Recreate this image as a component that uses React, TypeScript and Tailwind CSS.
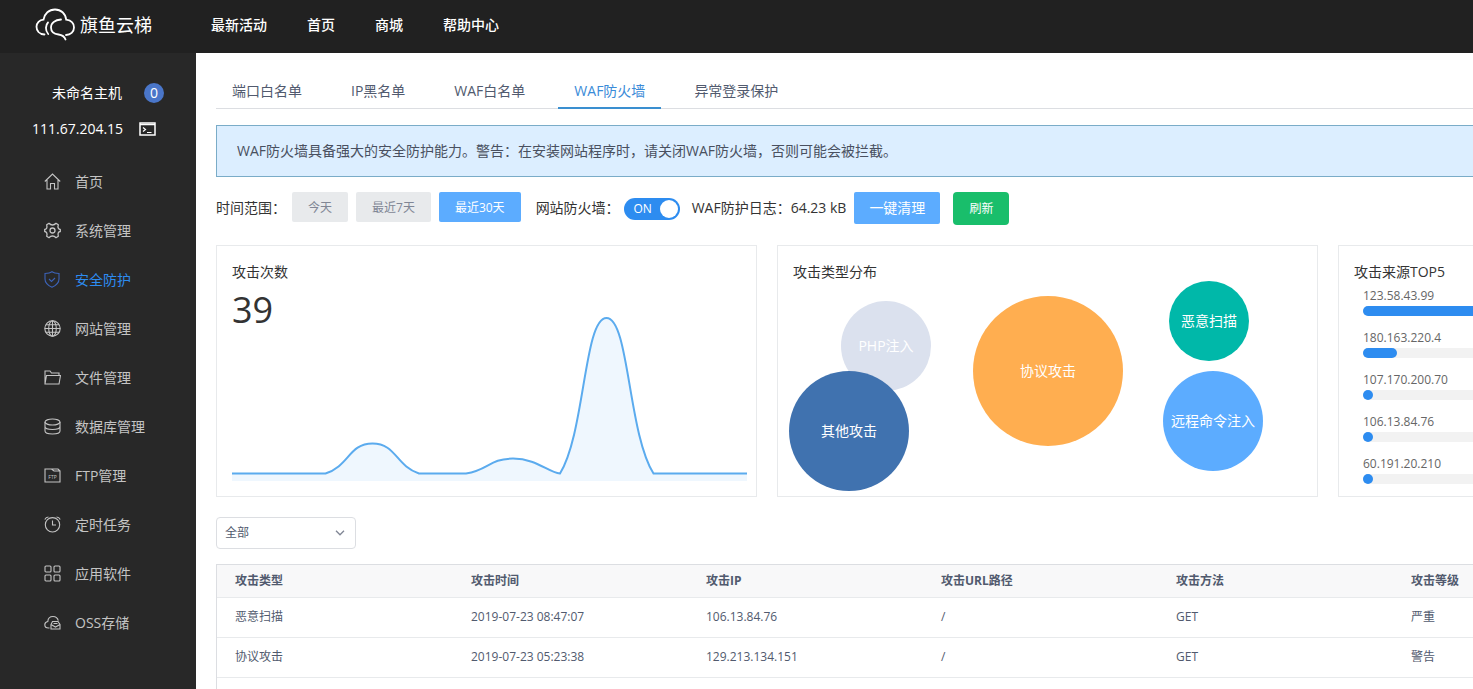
import React, { useState } from 'react';

const navLinks = ['最新活动', '首页', '商城', '帮助中心'];

const tabs = ['端口白名单', 'IP黑名单', 'WAF白名单', 'WAF防火墙', '异常登录保护'];

const ranges = ['今天', '最近7天', '最近30天'];

const menuItems = [
  { label: '首页', icon: <path d="M.8 8.5 8.5 1l7.700 7.500M3 7v9h3.500v-5.500h4V16H14V7" /> },
  {
    label: '系统管理',
    icon: (
      <>
        <path
          d="M5 1.300Q6.500 3 8.500 3T12 1.300L14.300 2.800Q13.600 5 14.300 6.200T16.300 7.500V9.500Q14.800 9.800 14.300 10.800T14.300 14.200L12 15.700Q10.500 14 8.500 14T5 15.700L2.700 14.200Q3.400 12 2.700 10.800T.7 9.500V7.500Q2.200 7.200 2.700 6.200T2.700 2.800z"
          strokeWidth="1.3"
          strokeLinejoin="round"
        />
        <circle cx="8.5" cy="8.5" r="2.5" strokeWidth="1.3" />
      </>
    ),
  },
  {
    label: '安全防护',
    icon: (
      <>
        <path d="M1 2.500C4 2.500 6.500 2 8 .8 9.500 2 12 2.500 15 2.500V8c0 4-3 6.500-7 8.200C4 14.500 1 12 1 8z" />
        <path d="m5 8 2.500 2.500L11 7" />
      </>
    ),
  },
  {
    label: '网站管理',
    icon: (
      <>
        <circle cx="8.5" cy="8.5" r="7.7" />
        <ellipse cx="8.5" cy="8.5" rx="3.8" ry="7.7" />
        <path d="M8.500.8v15.400M.8 8.500h15.400M2 4.700h13M2 12.300h13" />
      </>
    ),
  },
  { label: '文件管理', icon: <path d="M1 15V2h5l1.500 2H15v2.500M1 15l1.500-8.500h14L15 15z" /> },
  {
    label: '数据库管理',
    icon: (
      <>
        <ellipse cx="8.5" cy="4" rx="7.5" ry="3" />
        <path d="M1 4v9c0 4 15 4 15 0V4M1 8.500c0 4 15 4 15 0" />
      </>
    ),
  },
  {
    label: 'FTP管理',
    icon: (
      <>
        <path d="M1 15V2h6.500L10 4h6v11zM7.500 2H14l2 2" />
        <text x="8.5" y="11.5" textAnchor="middle" fontSize="5" stroke="none" fill="currentColor">
          FTP
        </text>
      </>
    ),
  },
  {
    label: '定时任务',
    icon: (
      <>
        <circle cx="8.5" cy="8.8" r="7.2" />
        <path d="M8.500 4.500V9H12M.8 3.500C1.500 2 3 1 4.500 1M16.200 3.500C15.500 2 14 1 12.500 1" />
      </>
    ),
  },
  {
    label: '应用软件',
    icon: (
      <>
        <rect x="1" y="1" width="6" height="6" rx="1" />
        <rect x="10" y="1" width="6" height="6" rx="1" />
        <rect x="1" y="10" width="6" height="6" rx="1" />
        <rect x="10" y="10" width="6" height="6" rx="1" />
      </>
    ),
  },
  {
    label: 'OSS存储',
    icon: (
      <>
        <path d="M5.500 14h-1C2 14 .8 12.500.8 10.700.8 9 2 7.800 3.800 7.500 4 4.500 6 2.500 9 2.500s4.700 1.700 5.300 4.200" />
        <path d="M7 10.500 8.500 7.500H14l2 3V15H7zM7 10.500l4.500 2.500 4.500-2.500M9.500 9.500h4" />
      </>
    ),
  },
];

const bubbles = [
  { label: 'PHP注入', cx: 108, cy: 72, r: 45, fill: '#dbe1ee' },
  { label: '其他攻击', cx: 71, cy: 157, r: 60, fill: '#4072af' },
  { label: '协议攻击', cx: 270, cy: 97, r: 75, fill: '#ffae50' },
  { label: '恶意扫描', cx: 431, cy: 47, r: 40, fill: '#00b8a9' },
  { label: '远程命令注入', cx: 435, cy: 147, r: 50, fill: '#5cacff' },
];

const sources = [
  { ip: '123.58.43.99', percent: 60 },
  { ip: '180.163.220.4', percent: 7 },
  { ip: '107.170.200.70', percent: 2 },
  { ip: '106.13.84.76', percent: 2 },
  { ip: '60.191.20.210', percent: 2 },
];

const columns = ['攻击类型', '攻击时间', '攻击IP', '攻击URL路径', '攻击方法', '攻击等级'];

const records = [
  ['恶意扫描', '2019-07-23 08:47:07', '106.13.84.76', '/', 'GET', '严重'],
  ['协议攻击', '2019-07-23 05:23:38', '129.213.134.151', '/', 'GET', '警告'],
];

const LINE =
  'M0 162.500H93.500C117 155 117 132.500 140.500 132.500S164 155 187 162.500H234C257 159 257 147.600 281 147.600S316 161.500 328 162.500C353 122 352 7 374.500 7S396 122 421.500 162.500H515';

function Header() {
  return (
    <header className="flex h-[53px] shrink-0 items-center bg-[#212121] pb-1 text-white">
      <a href="#" className="flex w-[211px] items-center gap-1 pl-[35px] text-lg">
        <svg
          width="41"
          height="33"
          viewBox="0 0 41 33"
          fill="none"
          stroke="currentColor"
          strokeWidth="1.8"
          strokeLinecap="round"
          aria-hidden="true"
        >
          <path d="M9.500 26.500C4 26 1.500 22.500 1.500 18.800 1.500 15 4.500 12 8.500 11.700 9.500 5.500 14 1.500 20 1.500S30.500 5.500 31.200 11.700C36 12.500 39 15.500 39 19.500 39 24 35.500 27 31 27" />
          <path d="M26 11.500C20 12 16 15 16 19.500S19.500 26 23.500 26.500C27 27 29.500 28.500 30.500 31.500M13 14.500C10.500 17 10 22.500 13.200 26" />
        </svg>
        旗鱼云梯
      </a>
      <nav className="flex gap-10 text-sm font-medium">
        {navLinks.map((link) => (
          <a key={link} href="#" className="hover:text-[#5cacff]">
            {link}
          </a>
        ))}
      </nav>
    </header>
  );
}

function Sidebar() {
  return (
    <aside className="w-[196px] shrink-0 bg-[#282828] pt-[30px]">
      <div className="flex h-5 items-center justify-end gap-[22px] pr-8 text-sm text-white">
        未命名主机
        <span className="flex h-5 w-5 items-center justify-center rounded-full bg-[#4a76c9]">0</span>
      </div>
      <div className="mt-4 flex h-5 items-center gap-4 pl-8 text-sm text-white">
        111.67.204.15
        <button aria-label="终端">
          <svg width="17" height="14" viewBox="0 0 17 14" fill="none" stroke="currentColor" aria-hidden="true">
            <rect x="1" y="1" width="15" height="12" strokeWidth="1.5" />
            <path d="M1 2.500h15" strokeWidth="1.5" />
            <path d="m4 5.500 2.500 2L4 9.500M8 10.500h4.500" strokeWidth="1.2" />
          </svg>
        </button>
      </div>
      <nav className="mt-[18px]">
        {menuItems.map((item) => (
          <a
            key={item.label}
            href="#"
            className={`flex h-[49px] items-center gap-[14px] pl-11 text-sm ${
              item.label === '安全防护' ? 'text-[#2d8cf0]' : 'text-[#c4c4c4] hover:text-white'
            }`}
          >
            <svg
              width="17"
              height="17"
              viewBox="0 0 17 17"
              fill="none"
              stroke="currentColor"
              strokeWidth="1.1"
              className={item.label === '安全防护' ? 'text-[#3c63b8]' : ''}
              aria-hidden="true"
            >
              {item.icon}
            </svg>
            {item.label}
          </a>
        ))}
      </nav>
    </aside>
  );
}

function Card({ title, children }: { title: string; children: React.ReactNode }) {
  return (
    <section className="h-[252px] border border-[#e8eaec] pt-[15px]">
      <h2 className="px-[15px] text-sm/[21px]">{title}</h2>
      {children}
    </section>
  );
}

export default function App() {
  const [tab, setTab] = useState('WAF防火墙');
  const [range, setRange] = useState('最近30天');
  const [enabled, setEnabled] = useState(true);

  return (
    <div
      lang="zh-CN"
      className="flex h-screen flex-col overflow-hidden bg-white font-['Open_Sans','Noto_Sans_CJK_SC',sans-serif] text-[#333]"
    >
      <Header />
      <div className="flex min-h-0 flex-1">
        <Sidebar />
        <main className="min-w-0 flex-1 overflow-hidden">
          <div className="flex h-full min-w-[1703px] flex-col px-5 pt-[18px]">
            {/* Tabs */}
            <div role="tablist" className="flex gap-[17px] border-b border-[#dcdee2] text-sm/[21px]">
              {tabs.map((name) => (
                <button
                  key={name}
                  role="tab"
                  aria-selected={tab === name}
                  onClick={() => setTab(name)}
                  className={`-mb-px border-b-2 px-4 pt-[9px] pb-[6px] ${
                    tab === name ? 'border-[#3a8fd0] text-[#3a8bd8]' : 'border-transparent text-[#515a6e]'
                  }`}
                >
                  {name}
                </button>
              ))}
            </div>

            <div className="mt-4 border border-[#7aacc8] bg-[#dceeff] px-5 py-[15px] text-sm/5 text-[#495060]">
              WAF防火墙具备强大的安全防护能力。警告：在安装网站程序时，请关闭WAF防火墙，否则可能会被拦截。
            </div>

            {/* Toolbar */}
            <div className="mt-[15px] flex h-[33px] items-start text-sm/8">
              <span className="mr-[6px]">时间范围：</span>
              <div className="flex gap-2">
                {ranges.map((name) => (
                  <button
                    key={name}
                    onClick={() => setRange(name)}
                    className={`h-[30px] rounded-xs px-4 pt-[2px] text-xs ${
                      range === name ? 'bg-[#5cacff] text-white' : 'bg-[#e8eaec] text-[#808695]'
                    }`}
                  >
                    {name}
                  </button>
                ))}
              </div>
              <label htmlFor="waf-switch" className="ml-[15px] mr-1">
                网站防火墙：
              </label>
              <label
                className={`mt-[6px] flex h-[22px] w-14 items-center rounded-full px-[2px] text-xs text-white ${
                  enabled ? 'bg-[#2d8cf0]' : 'flex-row-reverse bg-[#c5c8ce]'
                }`}
              >
                <input
                  id="waf-switch"
                  type="checkbox"
                  className="sr-only"
                  checked={enabled}
                  onChange={(e) => setEnabled(e.target.checked)}
                />
                <span className="flex-1 text-center">{enabled ? 'ON' : 'OFF'}</span>
                <span className="h-[18px] w-[18px] rounded-full bg-white" />
              </label>
              <span className="ml-3 mr-2">WAF防护日志：64.23 kB</span>
              <button className="h-8 rounded-xs bg-[#5cacff] px-[15px] text-white">一键清理</button>
              <button className="ml-[13px] h-[33px] rounded bg-[#19be6b] px-4 text-xs text-white">刷新</button>
            </div>

            {/* Charts */}
            <div className="mt-5 grid grid-cols-3 gap-5">
              <Card title="攻击次数">
                <p className="mt-2 px-[15px] text-4xl/10">39</p>
                <svg
                  viewBox="0 0 515 170"
                  preserveAspectRatio="none"
                  className="-mt-[19px] ml-[15px] h-[170px] w-[calc(100%-24px)]"
                  role="img"
                  aria-label="攻击次数"
                >
                  <path d={`${LINE}V170H0Z`} fill="#eff7fe" />
                  <path d={LINE} fill="none" stroke="#5babee" strokeWidth="2" />
                </svg>
              </Card>

              <Card title="攻击类型分布">
                <svg viewBox="0 0 539 222" className="-mt-2 w-full" role="img" aria-label="攻击类型分布">
                  {bubbles.map((bubble) => (
                    <g key={bubble.label}>
                      <circle cx={bubble.cx} cy={bubble.cy} r={bubble.r} fill={bubble.fill} />
                      <text x={bubble.cx} y={bubble.cy + 5} textAnchor="middle" fontSize="14" fill="#fff">
                        {bubble.label}
                      </text>
                    </g>
                  ))}
                </svg>
              </Card>

              <Card title="攻击来源TOP5">
                <ul className="mt-1 flex flex-col gap-3 px-6 text-xs/5 text-[#666]">
                  {sources.map((source) => (
                    <li key={source.ip}>
                      {source.ip}
                      <div className="h-[10px] rounded-full bg-[#f2f2f2]">
                        <div className="h-full rounded-full bg-[#2d8cf0]" style={{ width: `${source.percent}%` }} />
                      </div>
                    </li>
                  ))}
                </ul>
              </Card>
            </div>

            {/* Type filter */}
            <div className="relative mt-5 h-8 w-[140px] shrink-0">
              <select
                aria-label="攻击类型"
                className="h-full w-full appearance-none rounded border border-[#dcdee2] bg-white px-2 text-xs text-[#515a6e]"
              >
                <option>全部</option>
                <option>恶意扫描</option>
                <option>协议攻击</option>
              </select>
              <svg
                width="10"
                height="6"
                viewBox="0 0 10 6"
                fill="none"
                stroke="#808695"
                strokeWidth="1.3"
                className="pointer-events-none absolute top-[13px] right-[11px]"
                aria-hidden="true"
              >
                <path d="m1 .8 4 4 4-4" />
              </svg>
            </div>

            {/* Records */}
            <div className="mt-[15px] flex-1 border-t border-l border-[#dcdee2]">
              <table className="w-full table-fixed text-left text-xs text-[#515a6e]">
                <thead>
                  <tr className="h-8 border-b border-[#e8eaec] bg-[#f8f8f9]">
                    {columns.map((column) => (
                      <th key={column} className="w-[235px] pl-[18px] font-bold first:w-[236px] last:w-auto">
                        {column}
                      </th>
                    ))}
                  </tr>
                </thead>
                <tbody>
                  {records.map((record) => (
                    <tr key={record[1]} className="h-10 border-b border-[#e8eaec]">
                      {record.map((value, i) => (
                        <td key={i} className="pl-[18px]">
                          {value}
                        </td>
                      ))}
                    </tr>
                  ))}
                </tbody>
              </table>
            </div>
          </div>
        </main>
      </div>
    </div>
  );
}
